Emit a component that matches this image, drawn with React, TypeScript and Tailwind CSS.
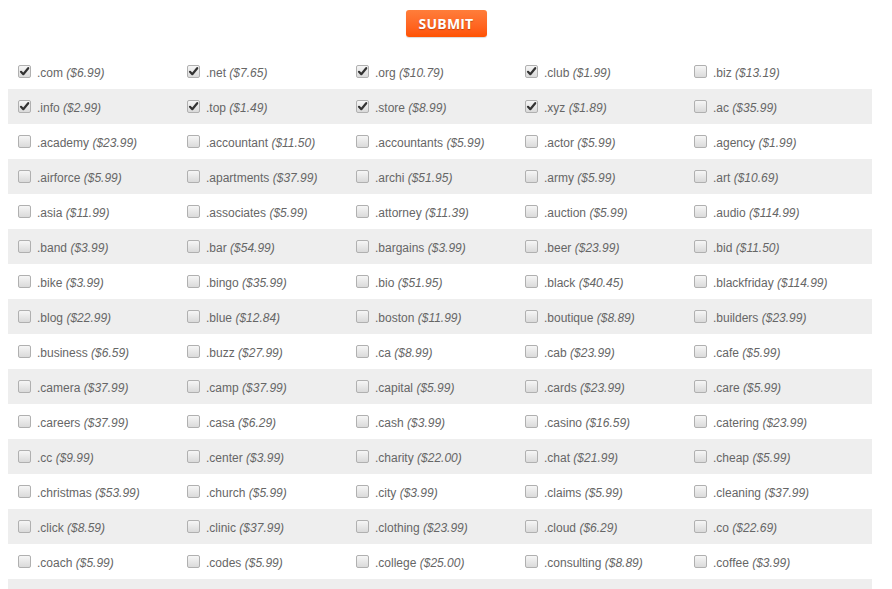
import React from "react";

const rows: [string, string, boolean][][] = [
  [[".com", "$6.99", true], [".net", "$7.65", true], [".org", "$10.79", true], [".club", "$1.99", true], [".biz", "$13.19", false]],
  [[".info", "$2.99", true], [".top", "$1.49", true], [".store", "$8.99", true], [".xyz", "$1.89", true], [".ac", "$35.99", false]],
  [[".academy", "$23.99", false], [".accountant", "$11.50", false], [".accountants", "$5.99", false], [".actor", "$5.99", false], [".agency", "$1.99", false]],
  [[".airforce", "$5.99", false], [".apartments", "$37.99", false], [".archi", "$51.95", false], [".army", "$5.99", false], [".art", "$10.69", false]],
  [[".asia", "$11.99", false], [".associates", "$5.99", false], [".attorney", "$11.39", false], [".auction", "$5.99", false], [".audio", "$114.99", false]],
  [[".band", "$3.99", false], [".bar", "$54.99", false], [".bargains", "$3.99", false], [".beer", "$23.99", false], [".bid", "$11.50", false]],
  [[".bike", "$3.99", false], [".bingo", "$35.99", false], [".bio", "$51.95", false], [".black", "$40.45", false], [".blackfriday", "$114.99", false]],
  [[".blog", "$22.99", false], [".blue", "$12.84", false], [".boston", "$11.99", false], [".boutique", "$8.89", false], [".builders", "$23.99", false]],
  [[".business", "$6.59", false], [".buzz", "$27.99", false], [".ca", "$8.99", false], [".cab", "$23.99", false], [".cafe", "$5.99", false]],
  [[".camera", "$37.99", false], [".camp", "$37.99", false], [".capital", "$5.99", false], [".cards", "$23.99", false], [".care", "$5.99", false]],
  [[".careers", "$37.99", false], [".casa", "$6.29", false], [".cash", "$3.99", false], [".casino", "$16.59", false], [".catering", "$23.99", false]],
  [[".cc", "$9.99", false], [".center", "$3.99", false], [".charity", "$22.00", false], [".chat", "$21.99", false], [".cheap", "$5.99", false]],
  [[".christmas", "$53.99", false], [".church", "$5.99", false], [".city", "$3.99", false], [".claims", "$5.99", false], [".cleaning", "$37.99", false]],
  [[".click", "$8.59", false], [".clinic", "$37.99", false], [".clothing", "$23.99", false], [".cloud", "$6.29", false], [".co", "$22.69", false]],
  [[".coach", "$5.99", false], [".codes", "$5.99", false], [".college", "$25.00", false], [".consulting", "$8.89", false], [".coffee", "$3.99", false]],
];

function Box({ checked }: { checked: boolean }) {
  return (
    <span className="relative inline-block w-[13px] h-[13px] shrink-0 rounded-[2px] border border-[#b0b0b0] bg-gradient-to-b from-[#f6f6f6] to-[#dadada]">
      {checked && (
        <svg viewBox="0 0 13 13" className="absolute left-[-1px] top-[-1px] w-[13px] h-[13px]">
          <path d="M3 6.8 L5.3 9.2 L10.2 3.2" fill="none" stroke="#333333" strokeWidth="2.2" strokeLinecap="round" strokeLinejoin="round" />
        </svg>
      )}
    </span>
  );
}

export default function App() {
  return (
    <div className="bg-white min-h-screen font-['Liberation_Sans',Arial,sans-serif] text-[12px] text-[#666666]">
      <div className="flex justify-center pt-[10px]">
        <button className="w-[81px] h-[27px] rounded-[3px] bg-gradient-to-b from-[#ff7d3a] to-[#ff5200] text-white font-bold text-[14px] font-['Open_Sans',sans-serif] tracking-[0.2px] [text-shadow:0_1px_1px_rgba(120,40,0,0.45)] shadow-[0_1px_1px_rgba(0,0,0,0.15)]">
          SUBMIT
        </button>
      </div>
      <div className="ml-[8px] w-[864px] mt-[17px]">
        {rows.map((row, i) => (
          <div
            key={i}
            className={`grid grid-cols-[169px_169px_169px_169px_1fr] h-[35px] items-center ${i % 2 === 1 ? "bg-[#eeeeee]" : "bg-white"}`}
          >
            {row.map(([name, price, checked]) => (
              <label key={name} className="flex items-center pl-[10px]">
                <Box checked={checked} />
                <span className="ml-[6px] pt-[2px] whitespace-nowrap">
                  {name} <i>({price})</i>
                </span>
              </label>
            ))}
          </div>
        ))}
        <div className="h-[35px] bg-[#eeeeee]" />
      </div>
    </div>
  );
}
